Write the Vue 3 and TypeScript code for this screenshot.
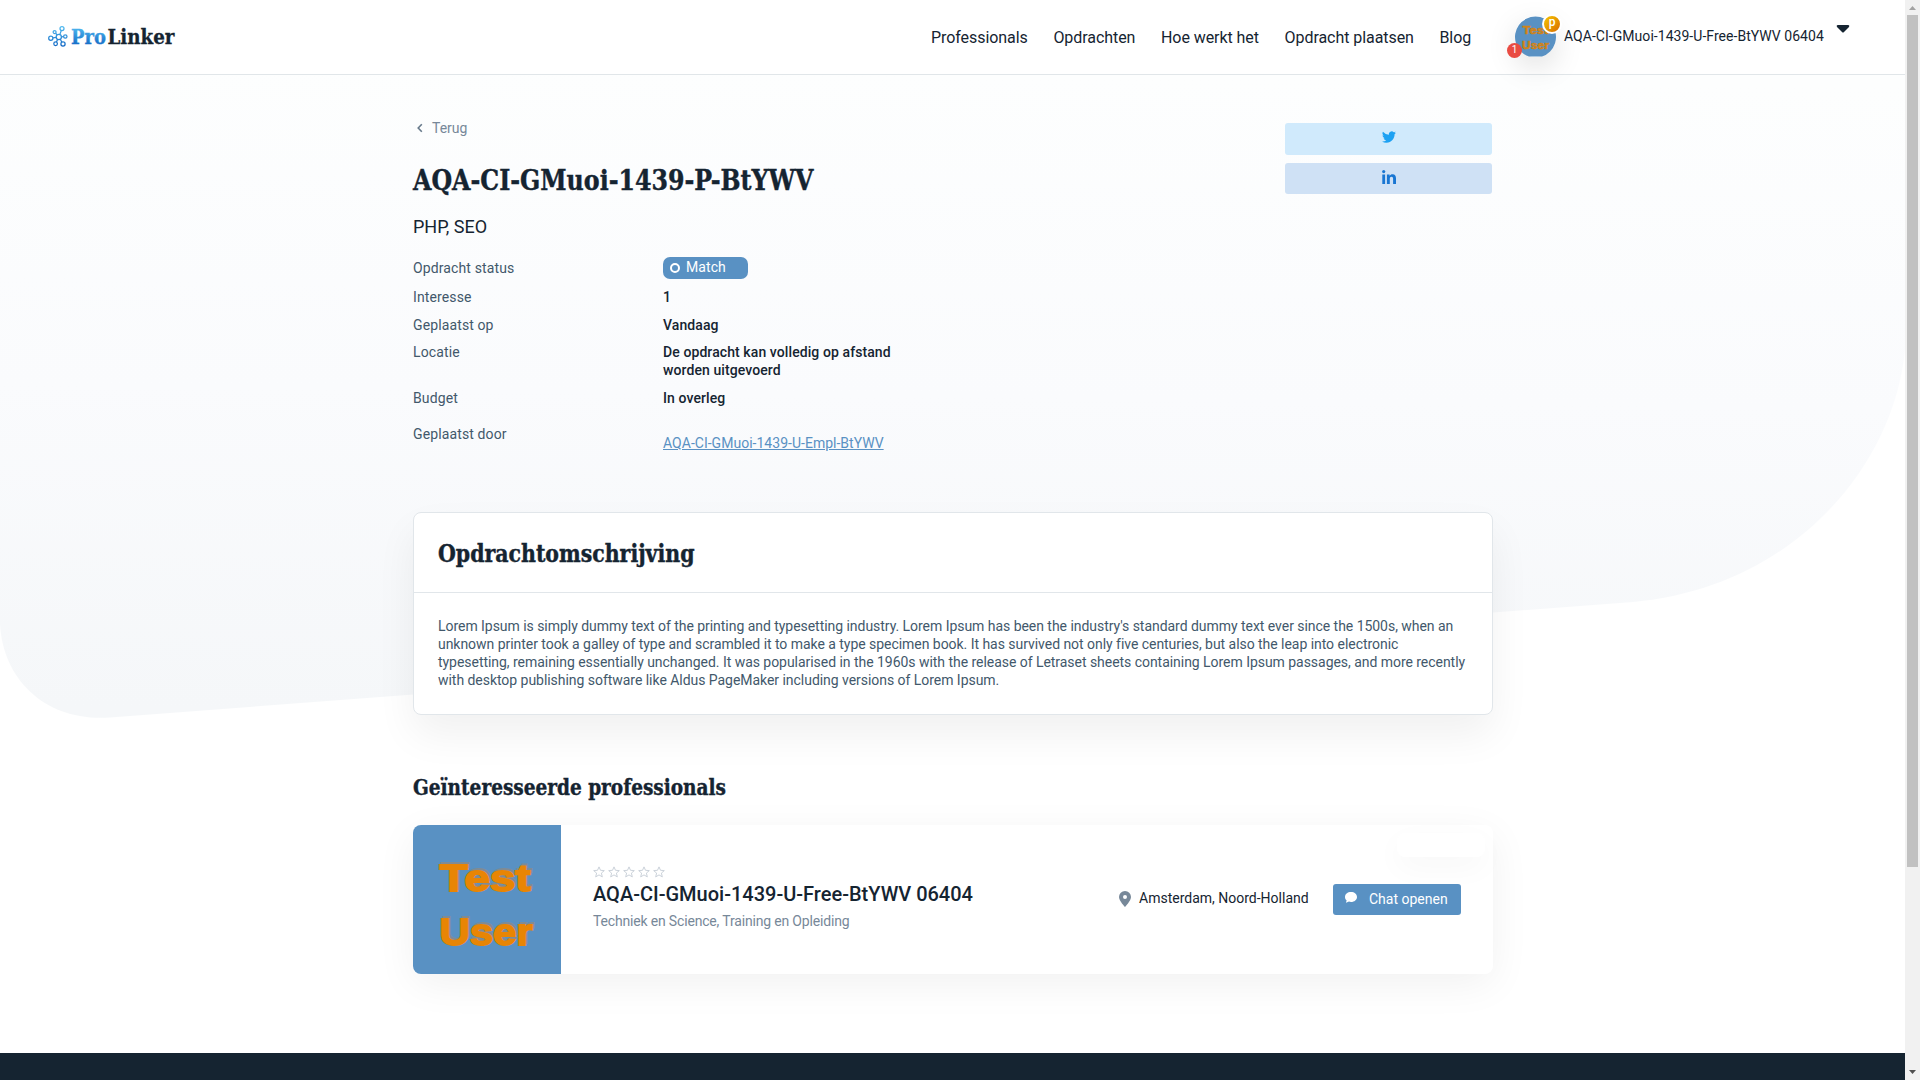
<script setup lang="ts">
const nav: string[] = ['Professionals', 'Opdrachten', 'Hoe werkt het', 'Opdracht plaatsen', 'Blog']

interface Detail {
  label: string
  kind: 'status' | 'text' | 'link'
  value: string
  row: string
}

const details: Detail[] = [
  { label: 'Opdracht status', kind: 'status', value: 'Match', row: 'row-status' },
  { label: 'Interesse', kind: 'text', value: '1', row: 'row-interest' },
  { label: 'Geplaatst op', kind: 'text', value: 'Vandaag', row: 'row-date' },
  { label: 'Locatie', kind: 'text', value: 'De opdracht kan volledig op afstand worden uitgevoerd', row: 'row-place' },
  { label: 'Budget', kind: 'text', value: 'In overleg', row: 'row-budget' },
  { label: 'Geplaatst door', kind: 'link', value: 'AQA-CI-GMuoi-1439-U-Empl-BtYWV', row: 'row-owner' },
]

const description: string[] = [
  "Lorem Ipsum is simply dummy text of the printing and typesetting industry. Lorem Ipsum has been the industry's standard dummy text ever since the 1500s, when an",
  'unknown printer took a galley of type and scrambled it to make a type specimen book. It has survived not only five centuries, but also the leap into electronic',
  'typesetting, remaining essentially unchanged. It was popularised in the 1960s with the release of Letraset sheets containing Lorem Ipsum passages, and more recently',
  'with desktop publishing software like Aldus PageMaker including versions of Lorem Ipsum.',
]
</script>

<template>
  <div class="screen">
    <div class="page">
      <svg class="backdrop" width="1905" height="645" viewBox="0 75 1905 645" aria-hidden="true">
        <defs>
          <linearGradient id="wash" x1="0.52" y1="0" x2="0.48" y2="1">
            <stop offset="0" stop-color="#fdfefe" />
            <stop offset="0.5" stop-color="#fafbfd" />
            <stop offset="1" stop-color="#f5f7f9" />
          </linearGradient>
        </defs>
        <path d="M0 75H1905V350C1893 470 1790 588 1633 602L110 717.500C48 722 3 682 0 624Z" fill="url(#wash)" />
      </svg>

      <header class="topbar">
        <a class="logo">
          <svg width="130" height="24" viewBox="0 0 130 24">
            <defs>
              <linearGradient id="brand" gradientUnits="userSpaceOnUse" x1="0" y1="2" x2="0" y2="21">
                <stop offset="0" stop-color="#4fb9f0" />
                <stop offset="1" stop-color="#1268c4" />
              </linearGradient>
            </defs>
            <g fill="none" stroke="url(#brand)" stroke-width="1.25">
              <circle cx="10.8" cy="12" r="2.6" />
              <circle cx="14" cy="3.6" r="2" />
              <circle cx="6.6" cy="7.1" r="1.5" />
              <circle cx="2.8" cy="13.2" r="2.1" />
              <circle cx="7.6" cy="18.7" r="1.8" />
              <circle cx="15" cy="19" r="2.1" />
              <circle cx="17.3" cy="11.5" r="1.7" />
              <path d="M11.8 9.6L13.3 5.5M9.2 10L7.6 8.3M8.2 12.3L4.9 12.9M9.6 14.4L8.4 17M12.3 14.2L13.9 17.2M13.4 11.9L15.6 11.6" />
            </g>
            <text x="23" y="19.3" class="brand-text" textLength="35" lengthAdjust="spacingAndGlyphs" fill="url(#brand)" stroke="url(#brand)">Pro</text>
            <text x="59.5" y="19.3" class="brand-text" textLength="67" lengthAdjust="spacingAndGlyphs" fill="#152431" stroke="#152431">Linker</text>
          </svg>
        </a>
        <nav class="nav">
          <a v-for="item in nav" :key="item">{{ item }}</a>
        </nav>
        <div class="account">
          <div class="avatar">
            <svg class="face" width="41" height="41" viewBox="0 0 41 41">
              <path d="M14 40.5A20.5 20.5 0 1 1 27 40.5Z" fill="#5991c3" />
              <text x="7.5" y="18" class="face-text" font-size="10" textLength="26" lengthAdjust="spacingAndGlyphs">Test</text>
              <text x="7" y="33" class="face-text" font-size="10" textLength="27" lengthAdjust="spacingAndGlyphs">User</text>
            </svg>
            <span class="badge-p">p</span>
            <span class="badge-count">1</span>
          </div>
          <span class="account-name">AQA-CI-GMuoi-1439-U-Free-BtYWV 06404</span>
          <svg class="caret" width="14" height="8" viewBox="0 0 14 8"><path d="M1.6 0H12.4Q14 .4 13 2L8 7Q7 8 6 7L1 2Q0 .4 1.6 0Z" fill="#152431" /></svg>
        </div>
      </header>

      <main class="container">
        <section class="intro">
          <div class="summary">
            <a class="back">
              <svg width="6" height="10" viewBox="0 0 6 10"><path d="M4.8 1.2L1.2 5L4.8 8.8" fill="none" stroke="#67798a" stroke-width="1.6" /></svg>
              <span>Terug</span>
            </a>
            <h1 class="title">
              <svg width="402" height="36"><text x="0" y="28" font-size="28" textLength="400.5" lengthAdjust="spacingAndGlyphs">AQA-CI-GMuoi-1439-P-BtYWV</text></svg>
            </h1>
            <p class="skills">PHP, SEO</p>
            <dl class="details">
              <div v-for="d in details" :key="d.label" class="detail" :class="d.row">
                <dt>{{ d.label }}</dt>
                <dd>
                  <span v-if="d.kind === 'status'" class="pill"><i class="ring"></i>{{ d.value }}</span>
                  <a v-else-if="d.kind === 'link'" class="owner">{{ d.value }}</a>
                  <template v-else>{{ d.value }}</template>
                </dd>
              </div>
            </dl>
          </div>
          <div class="share">
            <a class="share-btn twitter">
              <svg width="14" height="14" viewBox="0 0 24 24"><path fill="#1da1f2" d="M23.95 4.57a10 10 0 0 1-2.82.77 4.96 4.96 0 0 0 2.16-2.72c-.95.55-2 .95-3.13 1.18a4.92 4.92 0 0 0-8.38 4.48A13.93 13.93 0 0 1 1.64 3.16a4.92 4.92 0 0 0 1.52 6.57 4.9 4.9 0 0 1-2.23-.61v.06c0 2.38 1.7 4.37 3.95 4.82a5 5 0 0 1-2.21.09 4.94 4.94 0 0 0 4.6 3.42A9.87 9.87 0 0 1 0 19.54a13.94 13.94 0 0 0 7.55 2.21c9.05 0 14-7.5 14-13.98 0-.21 0-.42-.02-.63a9.94 9.94 0 0 0 2.42-2.57Z" /></svg>
            </a>
            <a class="share-btn linkedin">
              <svg width="14" height="14" viewBox="0 0 14 14" fill="#1976d2"><circle cx="1.7" cy="1.6" r="1.6" /><path d="M.3 4.6H3.1V14H.3ZM4.9 4.6H7.6V5.9C8.2 4.9 9.2 4.3 10.5 4.3C13.2 4.3 14 6 14 8.6V14H11.1V9.1C11.1 7.7 10.8 6.8 9.6 6.8C8.3 6.8 7.8 7.7 7.8 9V14H4.9Z" /></svg>
            </a>
          </div>
        </section>

        <section class="card">
          <h2 class="card-title">
            <svg width="258" height="36"><text x="0" y="26" font-size="24.5" textLength="256.5" lengthAdjust="spacingAndGlyphs">Opdrachtomschrijving</text></svg>
          </h2>
          <p class="card-body"><span v-for="line in description" :key="line">{{ line }}</span></p>
        </section>

        <h2 class="section-title">
          <svg width="315" height="36"><text x="0" y="26" font-size="23" textLength="313" lengthAdjust="spacingAndGlyphs">Geïnteresseerde professionals</text></svg>
        </h2>

        <article class="pro">
          <svg class="photo" width="148" height="149" viewBox="0 0 148 149">
            <rect width="148" height="149" fill="#5991c3" />
            <g class="photo-text" font-size="37.5">
              <g fill="#8d8983" stroke="#8d8983" opacity="0.75">
                <text x="28" y="64" textLength="91" lengthAdjust="spacingAndGlyphs">Test</text>
                <text x="28" y="118" textLength="93" lengthAdjust="spacingAndGlyphs">User</text>
              </g>
              <g fill="#e88504" stroke="#e88504">
                <text x="26.500" y="65.500" textLength="91" lengthAdjust="spacingAndGlyphs">Test</text>
                <text x="26.500" y="119.500" textLength="93" lengthAdjust="spacingAndGlyphs">User</text>
              </g>
            </g>
          </svg>
          <div class="pro-info">
            <div class="stars">
              <svg v-for="n in 5" :key="n" width="12" height="12" viewBox="0 0 12 12"><path d="M6 .9L7.5 4.3L11.3 4.6L8.4 7.1L9.3 10.9L6 8.9L2.700 10.9L3.6 7.1L.7 4.6L4.5 4.3Z" fill="none" stroke="#cbd2da" stroke-width="1" stroke-linejoin="round" /></svg>
            </div>
            <h3 class="pro-name">AQA-CI-GMuoi-1439-U-Free-BtYWV 06404</h3>
            <p class="pro-fields">Techniek en Science, Training en Opleiding</p>
          </div>
          <div class="pro-place">
            <svg width="12" height="16" viewBox="0 0 12 16"><path fill="#778899" fill-rule="evenodd" d="M6 0A6 6 0 0 0 0 6C0 9.800 6 16 6 16S12 9.800 12 6A6 6 0 0 0 6 0ZM6 4A2 2 0 1 1 6 8A2 2 0 0 1 6 4Z" /></svg>
            <span>Amsterdam, Noord-Holland</span>
          </div>
          <a class="chat">
            <svg width="12" height="11" viewBox="0 0 12 11"><path fill="#fff" d="M6 0C2.600 0 0 2.100 0 4.900C0 6.200.6 7.500 1.600 8.300L1 10.800L4 9.600C4.600 9.800 5.300 9.900 6 9.900C9.400 9.900 12 7.700 12 4.900C12 2.100 9.400 0 6 0Z" /></svg>
            <span>Chat openen</span>
          </a>
          <span class="empty-tag"></span>
        </article>
      </main>
      <footer class="footer"></footer>
    </div>

    <div class="scrollbar">
      <svg width="15" height="15"><path d="M4 10H11L7.500 6Z" fill="#a3a3a3" /></svg>
      <div class="thumb"></div>
      <svg class="down" width="15" height="15"><path d="M4 5H11L7.500 9Z" fill="#505050" /></svg>
    </div>
  </div>
</template>

<style>
html, body { margin: 0; overflow: hidden; background: #fff; }
</style>

<style scoped>
.screen {
  display: flex;
  width: 1920px;
  height: 1080px;
  overflow: hidden;
  color: #152431;
  font: 14px/18px Roboto, 'Liberation Sans', sans-serif;
}
h1, h2, h3, p, dl, dd { margin: 0; }
svg { display: block; flex: none; overflow: visible; }

.page {
  position: relative;
  display: flex;
  flex-direction: column;
  width: 1905px;
  height: 1080px;
  overflow: hidden;
  background: #fff;
}
.backdrop { position: absolute; top: 75px; left: 0; }

.topbar {
  position: relative;
  display: flex;
  flex: none;
  box-sizing: border-box;
  height: 75px;
  padding-left: 48px;
  background: #fff;
  border-bottom: 1px solid #e1e6e9;
}
.logo { width: 883px; padding-top: 25px; }
.brand-text, .title text, .card-title text, .section-title text {
  font-family: 'Roboto Slab', 'DejaVu Serif Condensed', 'DejaVu Serif', serif;
  font-weight: 700;
}
.brand-text { font-size: 21px; stroke-width: 0.3; }
.title text, .card-title text, .section-title text { fill: #152431; stroke: #152431; stroke-width: 0.4; }

.nav { display: flex; gap: 25.6px; width: 584px; box-sizing: border-box; padding-top: 28px; font-size: 16px; line-height: 19px; white-space: nowrap; letter-spacing: -0.06px; }
.account { display: flex; }
.avatar { position: relative; width: 41px; height: 41px; margin-top: 16px; border-radius: 50%; box-shadow: 0 10px 30px rgba(0, 0, 0, 0.13); }
.face-text, .photo-text {
  font-family: 'Liberation Sans', Arial, sans-serif;
  font-weight: 700;
}
.face-text { fill: #d08318; stroke: #d08318; stroke-width: 0.5; }
.photo-text { stroke-width: 1.8; }
.badge-p {
  position: absolute;
  top: -2px;
  left: 27px;
  box-sizing: border-box;
  width: 20px;
  height: 20px;
  border: 2px solid #fff;
  border-radius: 50%;
  background: linear-gradient(135deg, #f6c500, #d86c00);
  color: #fff;
  font-size: 12px;
  font-weight: 500;
  line-height: 13px;
  text-align: center;
}
.badge-count {
  position: absolute;
  top: 27px;
  left: -8px;
  width: 15px;
  height: 15px;
  border-radius: 50%;
  background: #e94b42;
  color: #fff;
  font-size: 10px;
  line-height: 14px;
  text-align: center;
}
.account-name { width: 273px; padding: 27px 0 0 8px; box-sizing: border-box; margin-right: 7px; letter-spacing: 0.04px; white-space: nowrap; }
.caret { margin-top: 25px; }

.container { position: relative; display: flex; flex-direction: column; width: 1080px; margin-left: 413px; }
.intro { display: flex; justify-content: space-between; height: 437px; }
.summary { display: flex; flex-direction: column; width: 500px; }
.back { display: flex; align-items: center; gap: 9px; margin: 44px 0 0 4px; color: #778899; }
.title { height: 36px; margin-top: 25px; }
.skills { margin-top: 18px; font-size: 18px; line-height: 22px; }
.details { margin-top: 19px; }
.detail { display: flex; }
.detail dt { width: 250px; color: #42586b; letter-spacing: 0.12px; }
.detail dd { width: 250px; font-weight: 500; letter-spacing: 0.09px; }
.row-status { height: 31px; }
.row-status dt { padding-top: 2px; }
.row-interest { height: 28px; }
.row-date { height: 27px; }
.row-place { height: 46px; }
.row-budget { height: 36px; }
.row-owner dd { padding-top: 9px; font-weight: 400; letter-spacing: 0.02px; }
.pill { display: flex; align-items: center; box-sizing: border-box; width: 85px; height: 22px; padding: 0 0 2px 7px; border-radius: 7px; background: #5991c3; color: #fff; font-weight: 400; }
.ring { box-sizing: border-box; width: 10px; height: 10px; margin: 2px 6px 0 0; border: 2px solid #fff; border-radius: 50%; }
.owner { color: #5991c3; text-decoration: underline; }

.share { display: flex; flex-direction: column; gap: 8px; width: 207px; margin-right: 1px; padding-top: 48px; }
.share-btn { display: flex; justify-content: center; box-sizing: border-box; height: 32px; border-radius: 3px; }
.twitter { padding-top: 7px; background: #d0eafc; }
.linkedin { height: 31px; padding-top: 7px; background: #cfe1f5; }

.card {
  box-sizing: border-box;
  height: 203px;
  border: 1px solid #e1e6ea;
  border-radius: 8px;
  background: #fff;
  box-shadow: 0 20px 40px rgba(0, 0, 0, 0.06);
}
.card-title { box-sizing: border-box; height: 80px; padding: 23px 0 0 24px; border-bottom: 1px solid #e1e6ea; }
.card-body { padding: 24px 0 0 24px; color: #42586b; letter-spacing: -0.04px; white-space: nowrap; }
.card-body span { display: block; }
.section-title { height: 36px; margin-top: 54px; }

.pro {
  position: relative;
  display: flex;
  height: 149px;
  margin-top: 20px;
  border-radius: 8px;
  background: #fff;
  box-shadow: 0 10px 40px rgba(0, 0, 0, 0.06);
}
.photo { overflow: hidden; border-radius: 8px 0 0 8px; }
.pro-info { width: 526px; padding: 41px 0 0 32px; box-sizing: border-box; }
.stars { display: flex; gap: 3px; }
.pro-name { margin-top: 4px; font-size: 20px; font-weight: 500; line-height: 24px; white-space: nowrap; }
.pro-fields { margin-top: 6px; color: #778899; letter-spacing: -0.17px; }
.pro-place { display: flex; gap: 8px; width: 246px; margin-left: 32px; padding-top: 64px; box-sizing: border-box; white-space: nowrap; }
.pro-place svg { margin-top: 2px; }
.chat { display: flex; gap: 12px; box-sizing: border-box; width: 128px; height: 31px; margin-top: 59px; margin-left: -32px; padding: 6px 0 0 12px; border-radius: 3px; background: #5991c3; color: #fff; white-space: nowrap; }
.chat svg { margin-top: 2px; }
.empty-tag { position: absolute; top: 8px; right: 8px; width: 88px; height: 24px; border-radius: 8px; background: #fff; box-shadow: 0 10px 30px rgba(0, 0, 0, 0.035); z-index: 0; }
.chat, .pro-place { position: relative; z-index: 1; }

.footer { position: relative; flex: none; height: 27px; margin-top: 79px; background: #152431; }

.scrollbar { display: flex; flex-direction: column; width: 15px; height: 1080px; background: #f1f1f1; }
.thumb { width: 11px; height: 852px; margin-left: 2px; background: #c1c1c1; }
.down { margin-top: auto; }
</style>
